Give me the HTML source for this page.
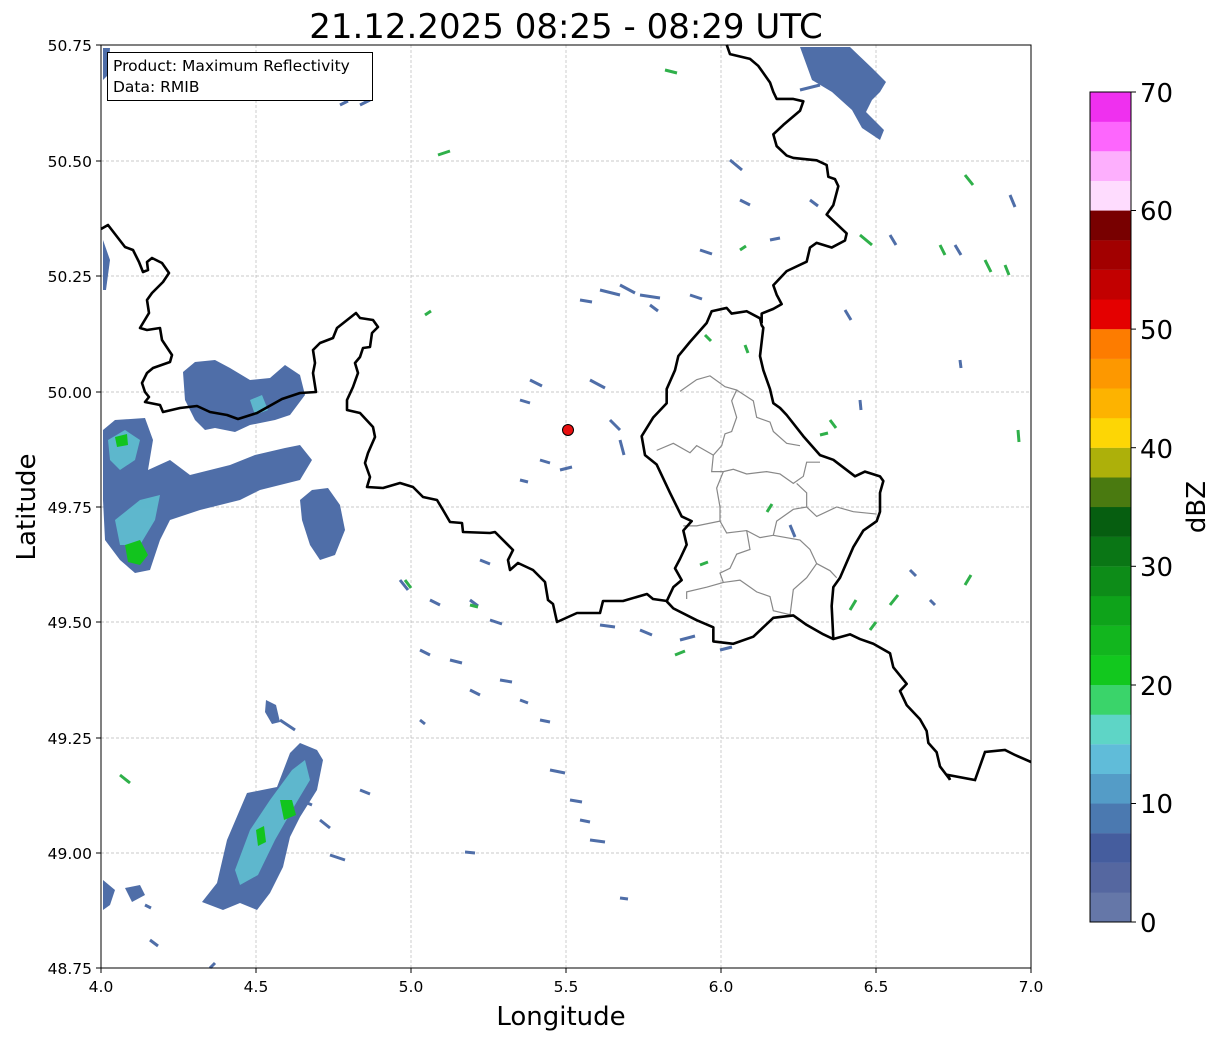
<!DOCTYPE html>
<html><head><meta charset="utf-8"><style>
html,body{margin:0;padding:0;background:#fff;}
body{width:1219px;height:1040px;overflow:hidden;font-family:"Liberation Sans","DejaVu Sans",sans-serif;}
</style></head><body>
<svg width="1219" height="1040" viewBox="0 0 1219 1040" xmlns="http://www.w3.org/2000/svg" font-family="DejaVu Sans, Liberation Sans, sans-serif">
<rect width="1219" height="1040" fill="#fff"/>
<g stroke="#b8b8b8" stroke-width="0.7" stroke-dasharray="3,2">
<line x1="256" y1="45" x2="256" y2="968"/><line x1="411" y1="45" x2="411" y2="968"/><line x1="566" y1="45" x2="566" y2="968"/><line x1="721" y1="45" x2="721" y2="968"/><line x1="876" y1="45" x2="876" y2="968"/>
<line x1="101" y1="161" x2="1031" y2="161"/><line x1="101" y1="276" x2="1031" y2="276"/><line x1="101" y1="392" x2="1031" y2="392"/><line x1="101" y1="507" x2="1031" y2="507"/><line x1="101" y1="622" x2="1031" y2="622"/><line x1="101" y1="738" x2="1031" y2="738"/><line x1="101" y1="853" x2="1031" y2="853"/>
</g>
<g fill="#4f6ea8">
<polygon points="202,902 217,883 227,840 247,793 277,787 290,753 300,743 317,750 323,760 317,790 300,817 290,837 283,867 270,893 257,910 240,903 223,910"/>
<polygon points="266,700 276,705 280,722 272,724 265,712"/>
<polygon points="800,47 850,47 872,68 886,82 880,92 872,100 866,112 884,130 880,140 862,128 852,110 832,92 812,80"/>
<polygon points="103,430 115,420 145,418 153,440 148,470 170,460 190,475 210,470 230,465 255,455 285,448 300,445 312,460 300,480 260,490 240,500 200,510 170,520 160,540 150,570 135,573 120,560 105,540 103,500"/>
<polygon points="183,372 195,362 215,360 230,368 250,380 270,378 285,365 300,375 305,395 290,415 275,420 250,425 235,432 215,428 205,430 195,420 185,400"/>
<polygon points="300,500 312,490 328,488 340,505 345,530 335,555 320,560 310,545 302,520"/>
<polygon points="103,880 115,890 110,905 103,910"/>
<polygon points="125,888 140,885 145,895 132,902"/>
<polygon points="103,240 110,260 106,290 103,290"/>
<polygon points="103,48 110,48 108,75 103,80"/>
</g>
<g fill="#5fbfd0" opacity="0.9">
<polygon points="235,870 250,830 270,800 292,770 305,760 310,780 295,805 275,840 258,875 240,885"/>
<polygon points="108,440 125,430 140,440 135,460 120,470 110,460"/>
<polygon points="115,520 140,500 160,495 155,520 140,545 120,545"/>
<polygon points="250,400 262,395 268,410 255,415"/>
</g>
<g fill="#12c41e">
<polygon points="125,545 140,540 148,555 140,565 128,562"/>
<polygon points="280,800 292,800 296,815 284,820"/>
<polygon points="256,830 264,826 266,842 258,846"/>
<polygon points="115,437 127,434 128,445 117,447"/>
</g>
<g stroke="#4f6ea8" stroke-width="3" stroke-linecap="butt">
<path d="M600 290l20 5M620 285l15 8M640 295l20 3M580 300l12 2M650 305l8 6M690 295l12 4M520 400l10 3M530 380l12 6M590 380l15 8M610 420l10 10M620 440l4 15M540 460l10 3M520 480l8 2M560 470l12 -3M420 650l10 5M450 660l12 3M470 690l10 5M500 680l12 2M520 700l8 3M540 720l10 2M550 770l15 3M570 800l12 2M580 820l10 2M590 840l15 2M465 852l10 1M620 898l8 1M480 560l10 4M400 580l8 10M430 600l10 5M470 600l8 6M490 620l12 4M600 625l15 2M640 630l12 5M680 640l15 -4M720 650l12 -3M800 90l20 -5M730 160l12 10M740 200l10 5M770 240l10 -2M700 250l12 4M810 200l8 6M890 235l6 10M955 245l6 10M1010 195l5 12M960 360l1 8M845 310l6 10M790 525l5 12M860 400l1 10M910 570l6 6M930 600l5 5M280 720l15 10M300 800l12 5M320 820l10 8M330 855l15 5M150 940l8 6M145 905l6 3M210 968l5 -5M360 790l10 4M340 105l8 -4M360 105l10 -5M420 720l5 4"/>
</g>
<g stroke="#2fb04a" stroke-width="3">
<path d="M665 70l12 3M438 155l12 -4M965 175l8 10M985 260l6 12M1005 265l4 10M940 245l5 10M860 235l12 10M820 435l8 -2M830 420l6 8M767 512l5 -8M745 345l3 8M705 335l6 6M850 610l6 -10M870 630l6 -8M890 605l8 -10M965 585l6 -10M1018 430l1 12M405 580l6 8M470 605l8 2M120 775l10 8M675 655l10 -4M700 565l8 -3M740 250l6 -4M425 315l6 -4"/>
</g>
<circle cx="568" cy="430" r="5.5" fill="#e81010" stroke="#000" stroke-width="1"/>
<g transform="translate(540,40) scale(0.33333,0.4717)" fill="none" stroke="#888" stroke-width="1.2">
<path vector-effect="non-scaling-stroke" d="M350 870L400 855 450 875 470 860 520 880 545 860 555 835 575 830 590 800 575 765 590 742 555 735 510 712 470 720 420 745"/>
<path vector-effect="non-scaling-stroke" d="M520 880L515 915 550 915 580 910 620 920 680 915 720 920 760 940 790 925 800 895 840 895"/>
<path vector-effect="non-scaling-stroke" d="M550 915L530 950 540 990 540 1020 470 1030 430 1030"/>
<path vector-effect="non-scaling-stroke" d="M540 1020L560 1045 620 1040 660 1055 700 1050 710 1020 760 995 800 990 830 1010 890 990 940 1000 1010 1005"/>
<path vector-effect="non-scaling-stroke" d="M800 990L800 960 770 940"/>
<path vector-effect="non-scaling-stroke" d="M620 1040L630 1080 590 1090 570 1120 540 1130 550 1150 500 1160 440 1170 440 1185"/>
<path vector-effect="non-scaling-stroke" d="M700 1050L780 1060 810 1080 830 1110 870 1125 890 1140"/>
<path vector-effect="non-scaling-stroke" d="M550 1150L600 1145 630 1160 650 1170 690 1180 700 1210 760 1220"/>
<path vector-effect="non-scaling-stroke" d="M830 1110L800 1140 760 1165 750 1220"/>
<path vector-effect="non-scaling-stroke" d="M590 742L640 765 650 800 690 810 700 830 740 855 780 860"/>
</g>
<g fill="none" stroke="#000" stroke-width="2.6" stroke-linejoin="round">
<polyline points="101,229 108,225 125,247 133,250 139,262 143,272 148,270 147,262 152,258 162,263 169,273 163,282 152,293 147,300 149,313 143,323 140,328 147,330 160,328 162,340 172,355 170,362 153,368 147,373 142,383 145,392 149,397 145,402 160,405 163,412 180,408 197,406 210,412 227,415 238,419 257,413 282,399 300,393 316,392 313,373 315,363 313,350 320,343 333,338 337,328 356,313 360,318 373,320 378,327 372,333 370,347 363,348 360,357 355,363 358,373 353,387 347,400 347,410 360,413 373,427 375,437 368,453 365,463 370,477 367,487 383,488 400,483 413,487 423,497 437,500 443,510 450,522 462,523 463,532 490,533 495,532 513,550 508,560 510,570 518,563 533,570 545,582 548,600 553,604 557,622 577,613 600,613 603,601 623,601 647,594 653,599 667,601"/>
</g>
<g transform="translate(540,40) scale(0.33333,0.4717)" fill="none" stroke="#000" stroke-width="2.6" stroke-linejoin="round">
<polyline vector-effect="non-scaling-stroke" points="380,1190 400,1160 425,1145 405,1120 420,1100 440,1070 430,1040 455,1020 425,1010 390,960 350,900 315,880 305,840 340,800 380,770 380,740 405,700 415,670 450,640 500,600 515,575 560,568 575,580 620,575 660,590 665,605 670,610 665,640 660,670 670,700 690,740 700,770 720,780 740,795 790,840 840,880 880,890 945,925 975,915 1020,925 1030,935 1020,960 1020,1000 1010,1020 970,1040 940,1075 900,1140 880,1160 875,1200 880,1270"/>
<polyline vector-effect="non-scaling-stroke" points="380,1190 400,1205 470,1230 520,1245 520,1275 580,1280 640,1265 700,1225 760,1220 800,1240 850,1260 880,1270 930,1260 960,1270 1000,1280 1050,1300 1060,1330 1100,1365 1080,1380 1100,1410 1140,1440 1160,1465 1165,1490 1190,1510 1200,1540 1230,1568"/>
<polyline vector-effect="non-scaling-stroke" points="665,600 665,580 700,570 725,560 710,540 700,520 740,490 800,470 810,440 830,430 875,440 915,425 920,410 890,390 860,370 880,350 895,310 885,295 865,290 860,265 830,255 760,250 740,245 710,225 700,200 730,180 780,150 790,130 760,125 710,125 700,110 690,90 655,55 630,40 570,30 560,10"/>
</g>
<polyline points="950,780 948,775 975,780 985,752 1005,750 1015,755 1031,762" fill="none" stroke="#000" stroke-width="2.6"/>
<rect x="101" y="45" width="930" height="923" fill="none" stroke="#000" stroke-width="1"/>
<g stroke="#000" stroke-width="1">
<line x1="101" y1="968" x2="101" y2="973"/><line x1="256" y1="968" x2="256" y2="973"/><line x1="411" y1="968" x2="411" y2="973"/><line x1="566" y1="968" x2="566" y2="973"/><line x1="721" y1="968" x2="721" y2="973"/><line x1="876" y1="968" x2="876" y2="973"/><line x1="1031" y1="968" x2="1031" y2="973"/>
<line x1="96" y1="45" x2="101" y2="45"/><line x1="96" y1="161" x2="101" y2="161"/><line x1="96" y1="276" x2="101" y2="276"/><line x1="96" y1="392" x2="101" y2="392"/><line x1="96" y1="507" x2="101" y2="507"/><line x1="96" y1="622" x2="101" y2="622"/><line x1="96" y1="738" x2="101" y2="738"/><line x1="96" y1="853" x2="101" y2="853"/><line x1="96" y1="968" x2="101" y2="968"/>
</g>
<g font-size="15.5" fill="#000">
<g text-anchor="middle"><text x="101" y="992">4.0</text><text x="256" y="992">4.5</text><text x="411" y="992">5.0</text><text x="566" y="992">5.5</text><text x="721" y="992">6.0</text><text x="876" y="992">6.5</text><text x="1031" y="992">7.0</text></g>
<g text-anchor="end"><text x="92" y="51">50.75</text><text x="92" y="167">50.50</text><text x="92" y="282">50.25</text><text x="92" y="398">50.00</text><text x="92" y="513">49.75</text><text x="92" y="628">49.50</text><text x="92" y="744">49.25</text><text x="92" y="859">49.00</text><text x="92" y="974">48.75</text></g>
</g>
<text x="566" y="38" font-size="34" text-anchor="middle">21.12.2025 08:25 - 08:29 UTC</text>
<text x="561" y="1025" font-size="26" text-anchor="middle">Longitude</text>
<text transform="translate(35,507) rotate(-90)" font-size="26" text-anchor="middle">Latitude</text>
<rect x="107.5" y="52.5" width="265" height="48" fill="#fff" stroke="#000" stroke-width="1"/>
<text x="113" y="71" font-size="15.5">Product: Maximum Reflectivity</text>
<text x="113" y="92" font-size="15.5">Data: RMIB</text>
<g>
<rect x="1090" y="892.4" width="41" height="29.8" fill="#6577a8"/>
<rect x="1090" y="862.8" width="41" height="29.8" fill="#5567a0"/>
<rect x="1090" y="833.1" width="41" height="29.8" fill="#455d9e"/>
<rect x="1090" y="803.5" width="41" height="29.8" fill="#4b79b0"/>
<rect x="1090" y="773.8" width="41" height="29.8" fill="#549cc7"/>
<rect x="1090" y="744.2" width="41" height="29.8" fill="#60bcd9"/>
<rect x="1090" y="714.5" width="41" height="29.8" fill="#5ed5c6"/>
<rect x="1090" y="684.9" width="41" height="29.8" fill="#3ad46a"/>
<rect x="1090" y="655.2" width="41" height="29.8" fill="#12c81e"/>
<rect x="1090" y="625.6" width="41" height="29.8" fill="#12b61e"/>
<rect x="1090" y="595.9" width="41" height="29.8" fill="#0ea31a"/>
<rect x="1090" y="566.3" width="41" height="29.8" fill="#0d8c18"/>
<rect x="1090" y="536.6" width="41" height="29.8" fill="#0a7615"/>
<rect x="1090" y="507" width="41" height="29.8" fill="#065e10"/>
<rect x="1090" y="477.3" width="41" height="29.8" fill="#4a7a10"/>
<rect x="1090" y="447.7" width="41" height="29.8" fill="#adb00a"/>
<rect x="1090" y="418" width="41" height="29.8" fill="#fdd605"/>
<rect x="1090" y="388.4" width="41" height="29.8" fill="#fdb300"/>
<rect x="1090" y="358.7" width="41" height="29.8" fill="#fd9800"/>
<rect x="1090" y="329.1" width="41" height="29.8" fill="#fd7c00"/>
<rect x="1090" y="299.4" width="41" height="29.8" fill="#e40000"/>
<rect x="1090" y="269.8" width="41" height="29.8" fill="#c20000"/>
<rect x="1090" y="240.1" width="41" height="29.8" fill="#a20000"/>
<rect x="1090" y="210.5" width="41" height="29.8" fill="#780000"/>
<rect x="1090" y="180.8" width="41" height="29.8" fill="#fedcfe"/>
<rect x="1090" y="151.2" width="41" height="29.8" fill="#fdaffd"/>
<rect x="1090" y="121.5" width="41" height="29.8" fill="#fd66fd"/>
<rect x="1090" y="92" width="41" height="29.8" fill="#ef30ef"/>
<rect x="1090" y="92" width="41" height="830" fill="none" stroke="#000" stroke-width="1"/>
<g stroke="#000" stroke-width="1"><line x1="1131" y1="922" x2="1136" y2="922"/><line x1="1131" y1="803.5" x2="1136" y2="803.5"/><line x1="1131" y1="685" x2="1136" y2="685"/><line x1="1131" y1="566.3" x2="1136" y2="566.3"/><line x1="1131" y1="447.7" x2="1136" y2="447.7"/><line x1="1131" y1="329.1" x2="1136" y2="329.1"/><line x1="1131" y1="210.5" x2="1136" y2="210.5"/><line x1="1131" y1="92" x2="1136" y2="92"/></g>
<g font-size="26"><text x="1140" y="932">0</text><text x="1140" y="813">10</text><text x="1140" y="695">20</text><text x="1140" y="576">30</text><text x="1140" y="458">40</text><text x="1140" y="339">50</text><text x="1140" y="220">60</text><text x="1140" y="102">70</text></g>
<text transform="translate(1205,507) rotate(-90)" font-size="26" text-anchor="middle">dBZ</text>
</g>
</svg>
</body></html>
